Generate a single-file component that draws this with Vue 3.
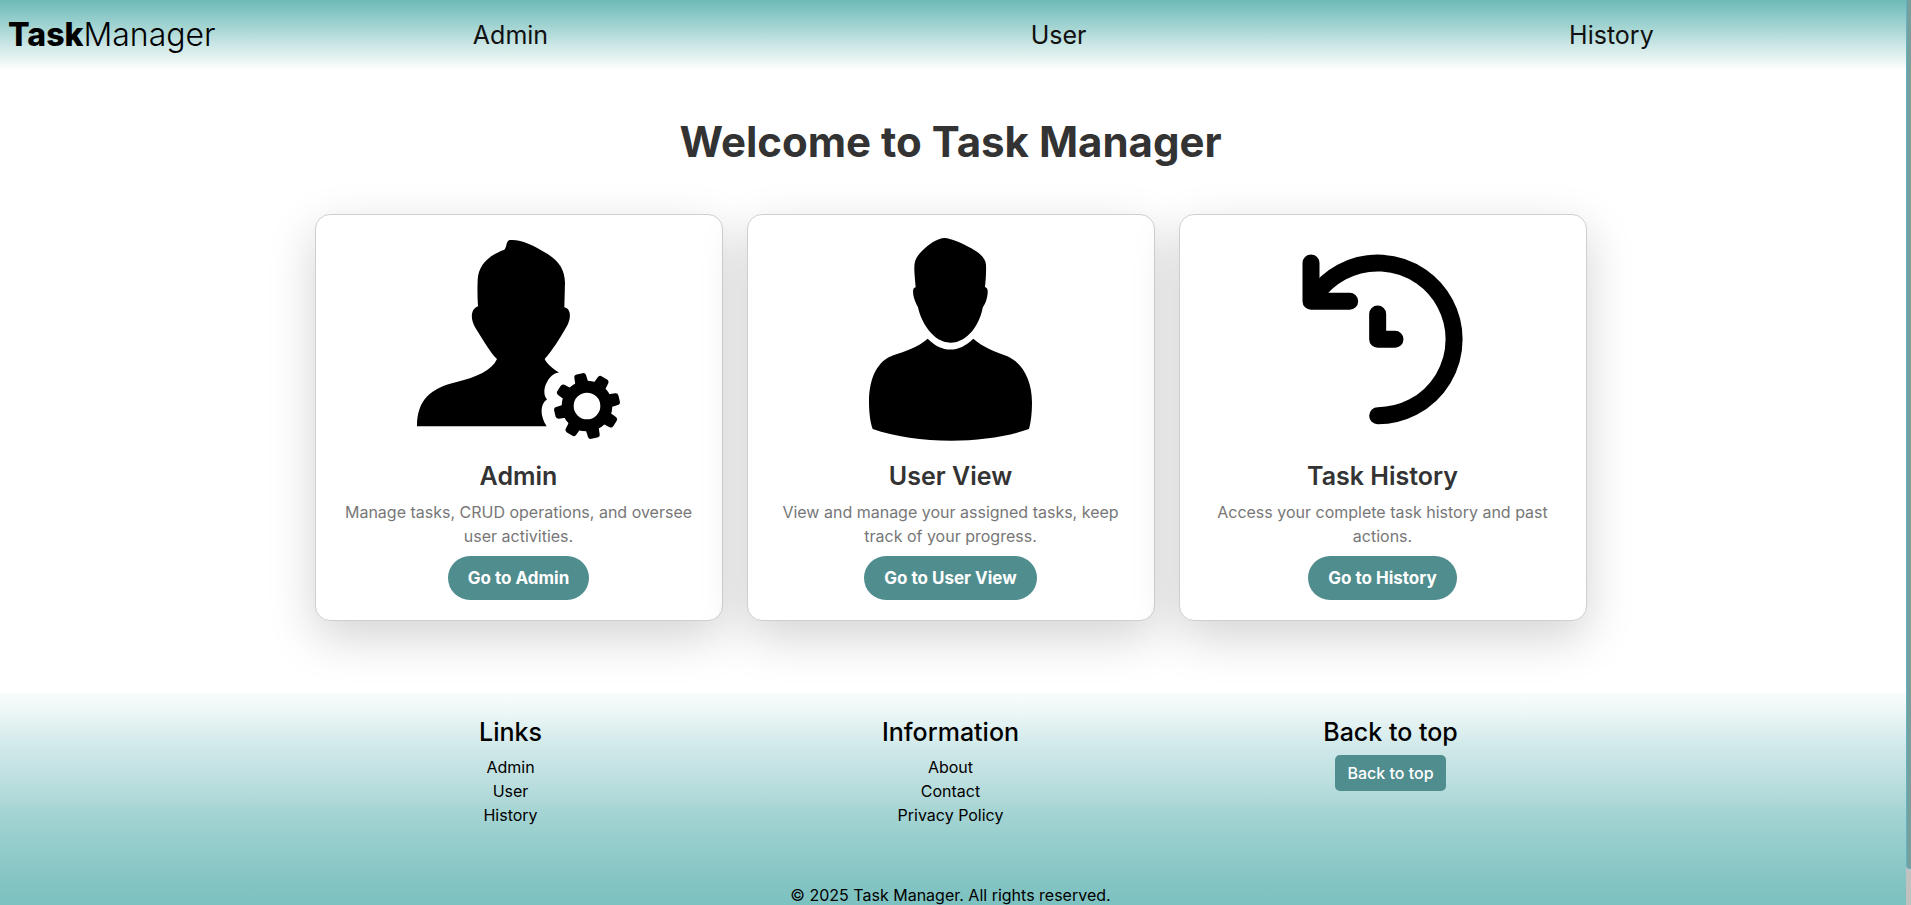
<script setup>
const navLinks = ['Admin', 'User', 'History']

const cards = [
  {
    icon: 'admin',
    title: 'Admin',
    text: 'Manage tasks, CRUD operations, and oversee user activities.',
    action: 'Go to Admin'
  },
  {
    icon: 'user',
    title: 'User View',
    text: 'View and manage your assigned tasks, keep track of your progress.',
    action: 'Go to User View'
  },
  {
    icon: 'history',
    title: 'Task History',
    text: 'Access your complete task history and past actions.',
    action: 'Go to History'
  }
]

const footerGroups = [
  { title: 'Links', links: ['Admin', 'User', 'History'] },
  { title: 'Information', links: ['About', 'Contact', 'Privacy Policy'] }
]

const gearTeeth = [0, 45, 90, 135, 180, 225, 270, 315]
</script>

<template>
  <div class="page">
    <header class="topbar">
      <a class="brand" href="#"><b>Task</b>Manager</a>
      <nav class="nav">
        <a v-for="link in navLinks" :key="link" href="#">{{ link }}</a>
      </nav>
    </header>

    <main class="main">
      <h1>Welcome to Task Manager</h1>
      <div class="cards">
        <article v-for="card in cards" :key="card.title" class="card">
          <svg v-if="card.icon === 'admin'" class="picture" viewBox="348 111 618 618" aria-hidden="true">
            <path d="M351 679C351 600 392 564 470 546C530 531 575 512 591 477C572 460 545 413 526 383C510 355 512 328 534 319C532 290 532 265 533 240C535 195 566 166 613 149C621 142 618 121 630 120C661 117 702 136 743 162C779 185 794 211 795 248L793 322C812 326 814 350 803 374C783 410 756 453 734 477C740 491 758 506 777 518C754 518 741 543 735 560C731 576 733 589 741 598C719 614 720 648 740 679Z" />
            <g transform="translate(861 618)">
              <g v-for="angle in gearTeeth" :key="angle" :transform="`rotate(${angle - 13})`">
                <path d="M-20 -66L-18 -91Q-17 -99 -9 -99L9 -99Q17 -99 18 -91L20 -66Z" />
              </g>
              <circle r="58" fill="none" stroke="#000" stroke-width="36" />
            </g>
          </svg>
          <svg v-else-if="card.icon === 'user'" class="picture" viewBox="324 111 618 618" aria-hidden="true">
            <path d="M527 262C525 235 523 221 523 205C523 178 531 168 548 151C565 134 592 114 614 114C631 114 667 130 694 145C722 161 737 176 738 194C739 220 737 240 735 261C746 264 743 278 742 287C739 304 735 311 728 323C720 370 684 428 631 428C580 428 543 367 534 322C526 306 523 299 520 285C519 276 517 264 527 262Z" />
            <path d="M563 416C607 460 656 459 700 416C729 442 764 454 802 469C849 490 876 542 876 608C876 638 873 664 867 687C737 734 528 733 398 687C388 660 387 623 387 603C388 533 413 482 460 466C497 453 533 442 563 416Z" />
          </svg>
          <svg v-else class="picture" viewBox="330 111 618 618" aria-hidden="true">
            <g fill="none" stroke="#000" stroke-width="51" stroke-linecap="round" stroke-linejoin="round">
              <path d="M623 647A229 229 0 1 0 434 289" />
              <path d="M423 189V304H539" />
              <path d="M623 342V418H675" />
            </g>
          </svg>
          <h2>{{ card.title }}</h2>
          <p>{{ card.text }}</p>
          <a class="action" href="#">{{ card.action }}</a>
        </article>
      </div>
    </main>

    <footer class="footer">
      <div class="groups">
        <section v-for="group in footerGroups" :key="group.title">
          <h3>{{ group.title }}</h3>
          <ul>
            <li v-for="link in group.links" :key="link"><a href="#">{{ link }}</a></li>
          </ul>
        </section>
        <section>
          <h3>Back to top</h3>
          <button class="top" type="button">Back to top</button>
        </section>
      </div>
      <p class="copyright">© 2025 Task Manager. All rights reserved.</p>
    </footer>
  </div>
  <div class="scroll-track" aria-hidden="true"><div class="scroll-thumb"></div></div>
</template>

<style>
body {
  margin: 0;
  background: #fff;
}
</style>

<style scoped>
* {
  box-sizing: border-box;
}

.page {
  height: 100vh;
  overflow-y: auto;
  scrollbar-width: none;
  font-family: Inter, "Noto Sans", sans-serif;
  font-size: 16px;
  line-height: 24px;
  color: #000;
}

h1,
h2,
h3,
p,
ul {
  margin: 0;
  padding: 0;
}

a {
  color: inherit;
  text-decoration: none;
}

.topbar {
  display: flex;
  align-items: center;
  gap: 16px;
  height: 70px;
  padding: 0 16px 0 8px;
  background: linear-gradient(#6dbab8, #97cfcd 30%, #b5dcda 50%, #cde7e7 65%, #e0f1ef 80%, #fff);
}

.brand {
  font-size: 32px;
  font-weight: 300;
  line-height: 40px;
}

.brand b {
  font-weight: 800;
}

.nav {
  display: flex;
  flex: 1;
  font-size: 25px;
  color: #111;
}

.nav a {
  flex: 1 1 auto;
  text-align: center;
}

.main {
  padding: 48px 10px 72px 0;
}

h1 {
  font-size: 42px;
  font-weight: 700;
  line-height: 48px;
  text-align: center;
  color: #333;
}

.cards {
  display: grid;
  grid-template-columns: repeat(3, 1fr);
  gap: 24px;
  max-width: 1272px;
  margin: 48px auto 0;
}

.card {
  display: flex;
  flex-direction: column;
  align-items: center;
  padding: 22px 20px 20px;
  border: 1px solid #cfcfcf;
  border-radius: 15px;
  background: #fff;
  box-shadow: 0 16px 48px rgba(0, 0, 0, 0.175);
  text-align: center;
}

.picture {
  display: block;
  width: 206px;
  height: 206px;
  margin-bottom: 18px;
}

h2 {
  margin-bottom: 9px;
  font-size: 25px;
  font-weight: 600;
  line-height: 30px;
  color: #333;
}

.card p {
  margin-bottom: 8px;
  color: #777;
}

.action {
  padding: 10px 20px;
  border-radius: 25px;
  background: #508d8e;
  color: #fff;
  font-size: 17px;
  font-weight: 700;
}

.footer {
  padding: 24px 10px 36px 0;
  background: linear-gradient(#f8fdfb, #ecf6f6 8%, #cfe8e9 22%, #bddfdf 35%, #a4d4d3 48%, #93cccb 62%, #84c4c3 75%, #7cc2c0 85%, #6dbab8);
  text-align: center;
}

.groups {
  display: grid;
  grid-template-columns: repeat(3, 1fr);
  max-width: 1320px;
  margin: 0 auto;
}

h3 {
  margin-bottom: 8px;
  font-size: 25px;
  font-weight: 500;
  line-height: 30px;
}

ul {
  list-style: none;
}

.top {
  padding: 6px 12px;
  border: 0;
  border-radius: 5px;
  background: #508d8e;
  color: #fff;
  font: inherit;
  font-weight: 500;
}

.copyright {
  margin-top: 56px;
}

.scroll-track {
  position: fixed;
  top: 0;
  right: 0;
  bottom: 0;
  width: 5px;
  background: #c1c1c1;
}

.scroll-thumb {
  height: 96%;
  border-left: 1px solid #62b2c4;
  border-bottom: 1px solid #62b2c4;
  border-bottom-left-radius: 4px;
  background: #75a09e;
}
</style>
